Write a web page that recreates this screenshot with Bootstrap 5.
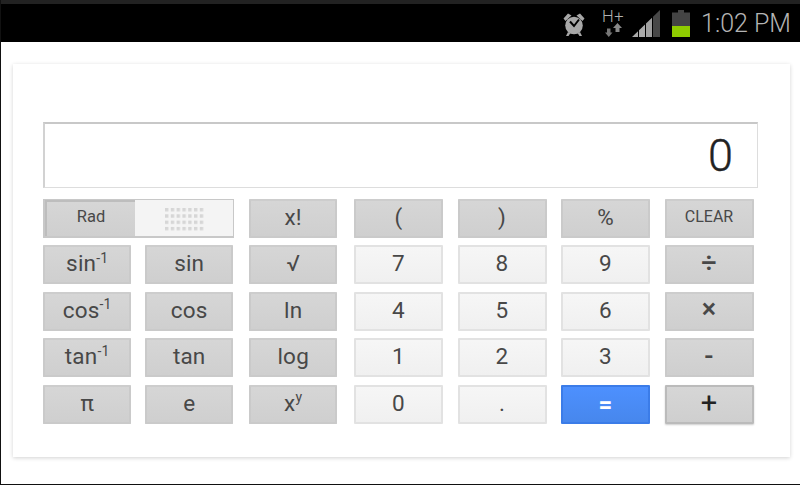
<!DOCTYPE html>
<html lang="en">
<head>
<meta charset="utf-8">
<title>Calculator</title>
<link href="https://cdn.jsdelivr.net/npm/bootstrap@5.3.0/dist/css/bootstrap.min.css" rel="stylesheet">
<style>
html,body{height:485px;overflow:hidden;background:#fff;font-family:Roboto,"Liberation Sans",sans-serif}
.shell{width:800px;height:485px;display:flex;flex-direction:column;border-bottom:1px solid #111;border-left:1px solid #111}
.statusbar{height:42px;background:#000;border-top:4px solid #222;color:#b4b4b4;padding-right:9px}
.clock{font-size:25px;font-weight:300;line-height:1;margin-left:11px;margin-top:1px}
.alarm{width:24px;height:24px;margin-top:2px}
.netstat{width:20px;height:27px;margin-left:15px;margin-top:1px}
.netstat span{font-size:16.5px;font-weight:300;line-height:13px;height:13px;display:block;color:#b0b0b0;letter-spacing:.6px;white-space:nowrap}
.netstat svg{display:block}
.signal{width:28px;height:27px;margin-left:10px;margin-top:1px}
.battery{width:18px;height:27px;margin-left:12px;margin-top:1px}
.calc-card{margin:22px 10px 27px 12px;height:393px;border:0;border-radius:0;box-shadow:0 1px 4px rgba(0,0,0,.18);padding:58px 31px 0 30px;background:#fff}
.readout{height:66px;border:2px solid #d2d2d2;border-top-color:#c8c8c8;border-bottom-width:1px;border-right-width:1px;border-bottom-color:#ddd;border-right-color:#ddd;font-size:45px;font-weight:300;-webkit-text-stroke:.4px #222;color:#222;line-height:1;padding:0 24px 0 0;margin-bottom:11px;width:715px}
.keys{gap:17px}
.keygrid{display:grid;grid-auto-rows:39px;row-gap:7.4px}
.keygrid-l{grid-template-columns:102px 104px 88px;width:294px}
.keygrid-l .key{width:88.4px}
.keygrid-r{grid-template-columns:repeat(4,89px);column-gap:14.5px;width:400px}
.key{font-size:22.5px;height:39px;border-radius:1px;border:2px solid #cacaca;border-top-color:#cdcdcd;background:linear-gradient(#d6d6d6,#cfcfcf);color:#484848;padding:0 0 4px;font-family:inherit;letter-spacing:.2px}
.key:hover{background:linear-gradient(#d6d6d6,#cfcfcf);color:#484848;border-color:#cacaca}
.key sup{font-size:14px;top:-.6em;line-height:0;vertical-align:baseline;position:relative}
.key-light{background:linear-gradient(#f6f6f6,#f0f0f0);border-color:#e2e2e2}
.key-light:hover{background:linear-gradient(#f6f6f6,#f0f0f0);border-color:#e2e2e2}
.key-small{font-size:16px;letter-spacing:0}
.key-blue{background:linear-gradient(#4d90fe,#4787ed);border-color:#3b7ce8;color:#fff;font-weight:700;font-size:24px}
.key-blue:hover{background:linear-gradient(#4d90fe,#4787ed);border-color:#3b7ce8;color:#fff}
.key-plus{border-color:#bbb;box-shadow:0 1px 2px rgba(0,0,0,.2);color:#222;font-size:29px;font-weight:400;line-height:1;padding-bottom:2px}
.key-op{font-size:27px;font-weight:500;line-height:1;padding-bottom:3px}
.mode{grid-column:span 2;width:191px;height:39px;border:1px solid #c8c8c8;border-left-width:2px;border-bottom-width:2px;background:#f4f4f4;display:flex}
.mode-on{width:90px;background:linear-gradient(#d6d6d6,#cfcfcf);border:2px solid #bdbdbd;border-right:0;border-bottom:0;font-size:16.5px;color:#484848;text-align:center;line-height:30px}
.mode-off{flex:1;padding-top:8px;padding-left:2px}
</style>
</head>
<body>
<div class="shell">
  <div class="statusbar d-flex justify-content-end align-items-center">
    <svg class="alarm" viewBox="0 0 24 24">
      <circle cx="11" cy="13.500" r="8.800" fill="#a8a8a8"/>
      <path d="M7 9.500 11 14 16 7.500" fill="none" stroke="#000" stroke-width="2"/>
      <path d="M.5 6.500 5 1.500 8.500 3.500 2.500 9ZM21.500 6.500 17 1.500 13.500 3.500 19.500 9ZM5 20 3 24h2.500l2-3ZM17 20 19 24h-2.500l-2-3Z" fill="#a8a8a8"/>
    </svg>
    <div class="netstat">
      <span>H+</span>
      <svg width="20" height="14" viewBox="0 0 20 14"><path d="M5 5.500h3.500l0 4h2L6.800 14 3 9.500h2Z" fill="#777"/><path d="M15.500 0 20 5h-2.500v4h-4V5H11Z" fill="#888"/></svg>
    </div>
    <svg class="signal" viewBox="0 0 28 27">
      <path d="M0 27 6 21.200V27Z" fill="#aaa"/><path d="M7 20.200 13 14.500V27H7Z" fill="#aaa"/><path d="M14 13.500 20 7.700V27H14Z" fill="#a0a0a0"/><path d="M21 6.750 28 0V27H21Z" fill="#484848"/>
    </svg>
    <svg class="battery" viewBox="0 0 18 27">
      <path d="M6 0h6v2.500h6V16H0V2.500h6Z" fill="#444"/><rect y="16" width="18" height="11" fill="#8fcc00"/>
    </svg>
    <div class="clock">1:02 PM</div>
  </div>
  <div class="card calc-card">
    <div class="readout d-flex justify-content-end align-items-center">0</div>
    <div class="keys d-flex">
      <div class="keygrid keygrid-l">
        <div class="mode">
          <div class="mode-on">Rad</div>
          <div class="mode-off d-flex justify-content-center">
            <svg width="40" height="23" viewBox="0 0 40 23">
              <defs><pattern id="dots" width="5.800" height="6.300" patternUnits="userSpaceOnUse"><rect width="3.400" height="3.400" fill="#d6d6d6"/></pattern></defs>
              <rect width="40" height="23" fill="url(#dots)"/>
            </svg>
          </div>
        </div>
        <button class="btn key">x!</button>
        <button class="btn key">sin<sup>-1</sup></button>
        <button class="btn key">sin</button>
        <button class="btn key">√</button>
        <button class="btn key">cos<sup>-1</sup></button>
        <button class="btn key">cos</button>
        <button class="btn key">ln</button>
        <button class="btn key">tan<sup>-1</sup></button>
        <button class="btn key">tan</button>
        <button class="btn key">log</button>
        <button class="btn key">π</button>
        <button class="btn key">e</button>
        <button class="btn key">x<sup>y</sup></button>
      </div>
      <div class="keygrid keygrid-r">
        <button class="btn key">(</button>
        <button class="btn key">)</button>
        <button class="btn key">%</button>
        <button class="btn key key-small">CLEAR</button>
        <button class="btn key key-light">7</button>
        <button class="btn key key-light">8</button>
        <button class="btn key key-light">9</button>
        <button class="btn key key-op">÷</button>
        <button class="btn key key-light">4</button>
        <button class="btn key key-light">5</button>
        <button class="btn key key-light">6</button>
        <button class="btn key key-op">×</button>
        <button class="btn key key-light">1</button>
        <button class="btn key key-light">2</button>
        <button class="btn key key-light">3</button>
        <button class="btn key key-op">-</button>
        <button class="btn key key-light">0</button>
        <button class="btn key key-light">.</button>
        <button class="btn key key-blue">=</button>
        <button class="btn key key-plus">+</button>
      </div>
    </div>
  </div>
</div>
<script src="https://cdn.jsdelivr.net/npm/bootstrap@5.3.0/dist/js/bootstrap.bundle.min.js"></script>
</body>
</html>
